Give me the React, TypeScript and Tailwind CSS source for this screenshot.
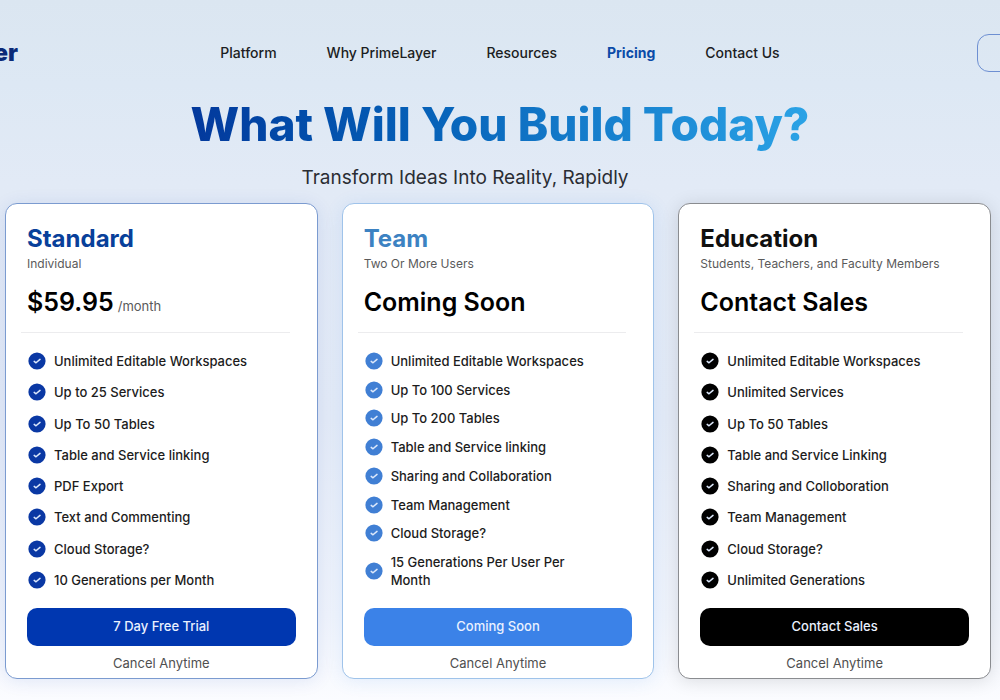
import clsx from 'clsx';

interface Plan {
  name: string;
  audience: string;
  price: string;
  period?: string;
  features: string[];
  action: string;
  cardClass: string;
  nameClass: string;
  iconClass: string;
  buttonClass: string;
}

const navLinks = ['Platform', 'Why PrimeLayer', 'Resources', 'Pricing', 'Contact Us'];

const plans: Plan[] = [
  {
    name: 'Standard',
    audience: 'Individual',
    price: '$59.95',
    period: '/month',
    features: [
      'Unlimited Editable Workspaces',
      'Up to 25 Services',
      'Up To 50 Tables',
      'Table and Service linking',
      'PDF Export',
      'Text and Commenting',
      'Cloud Storage?',
      '10 Generations per Month',
    ],
    action: '7 Day Free Trial',
    cardClass: 'border-[#7b9bd0] shadow-[0_2px_18px_rgba(0,55,178,0.1)]',
    nameClass: 'text-[#08409a]',
    iconClass: 'text-[#0a38a4]',
    buttonClass: 'bg-[#0037b0]',
  },
  {
    name: 'Team',
    audience: 'Two Or More Users',
    price: 'Coming Soon',
    features: [
      'Unlimited Editable Workspaces',
      'Up To 100 Services',
      'Up To 200 Tables',
      'Table and Service linking',
      'Sharing and Collaboration',
      'Team Management',
      'Cloud Storage?',
      '15 Generations Per User Per Month',
    ],
    action: 'Coming Soon',
    cardClass: 'border-[#9fc3ea] shadow-[0_2px_18px_rgba(60,130,232,0.12)]',
    nameClass: 'text-[#3c82c2]',
    iconClass: 'text-[#407fd4]',
    buttonClass: 'bg-[#3b82e8]',
  },
  {
    name: 'Education',
    audience: 'Students, Teachers, and Faculty Members',
    price: 'Contact Sales',
    features: [
      'Unlimited Editable Workspaces',
      'Unlimited Services',
      'Up To 50 Tables',
      'Table and Service Linking',
      'Sharing and Colloboration',
      'Team Management',
      'Cloud Storage?',
      'Unlimited Generations',
    ],
    action: 'Contact Sales',
    cardClass: 'border-[#8a8c90] shadow-[0_2px_18px_rgba(0,0,0,0.12)]',
    nameClass: 'text-[#101010]',
    iconClass: 'text-black',
    buttonClass: 'bg-black',
  },
];

function CheckIcon({ className }: { className: string }) {
  return (
    <svg viewBox="0 0 18 18" className={clsx('size-[18px] shrink-0', className)} aria-hidden="true">
      <circle cx="9" cy="9" r="8.6" fill="currentColor" />
      <path
        d="M6.2 9.4 8 10.8 12 7.4"
        fill="none"
        stroke="#dce8fb"
        strokeWidth="1.5"
        strokeLinecap="round"
        strokeLinejoin="round"
      />
    </svg>
  );
}

function Header() {
  return (
    <header className="-mx-[142px] grid grid-cols-[1fr_auto_1fr] items-center pt-[34px]">
      <a href="#home" className="w-40 text-right text-[23px] leading-7 font-black text-[#0b2a78]">
        PrimeLayer
      </a>
      <nav className="flex gap-[50px] text-sm leading-5 font-medium text-[#1b1d22]">
        {navLinks.map((link) => (
          <a
            key={link}
            href="#"
            className={clsx('whitespace-nowrap', link === 'Pricing' && 'font-bold text-[#0a4ba8]')}
          >
            {link}
          </a>
        ))}
      </nav>
      <button
        type="button"
        aria-label="Account"
        className="h-[38px] w-[165px] justify-self-end rounded-xl border border-[#6d8fd2]"
      />
    </header>
  );
}

function PlanCard({ plan }: { plan: Plan }) {
  return (
    <section className={clsx('rounded-xl border bg-white px-[21px] pt-[21px] pb-1.5', plan.cardClass)}>
      <h2 className={clsx('text-2xl leading-7 font-bold', plan.nameClass)}>{plan.name}</h2>
      <p className="mt-[3px] text-xs leading-4 whitespace-nowrap text-[#5a5a5a]">{plan.audience}</p>
      <p className="mt-3.5 text-[25px] leading-8 font-semibold whitespace-nowrap text-black">
        {plan.price}
        {plan.period && (
          <span className="ml-1 text-[13px] leading-none font-normal text-[#5a5a5a]">
            {plan.period}
          </span>
        )}
      </p>
      <hr className="mt-3.5 mr-1.5 -ml-1.5 border-[#ececee]" />
      <ul className="mt-[19px] flex h-[237px] flex-col justify-between">
        {plan.features.map((feature) => (
          <li
            key={feature}
            className="flex items-center gap-2 pr-10 pl-px text-[13px] leading-[18px] font-medium text-[#1c1c1c]"
          >
            <CheckIcon className={plan.iconClass} />
            <span>{feature}</span>
          </li>
        ))}
      </ul>
      <button
        type="button"
        className={clsx(
          'mt-[19px] h-[38px] w-full rounded-[10px] text-[13px] font-medium text-[#eaf1ff]',
          plan.buttonClass
        )}
      >
        {plan.action}
      </button>
      <p className="mt-2 text-center text-[13px] leading-[18px] text-[#4f4f4f]">Cancel Anytime</p>
    </section>
  );
}

export default function App() {
  return (
    <div className="min-h-screen overflow-hidden bg-[linear-gradient(180deg,#dbe6f1_0%,#dde8f4_12%,#e2eaf6_26%,#e4ebf7_60%,#f0f4fc_88%,#fbfcff_100%)] font-['Inter',sans-serif]">
      <Header />
      <main>
        <h1 className="mx-auto mt-[22px] w-fit bg-linear-to-r from-[#03389c] to-[#2ba3e6] bg-clip-text text-[46px] leading-[60px] font-extrabold whitespace-nowrap text-transparent">
          What Will You Build Today?
        </h1>
        <p className="mt-2.5 pr-[70px] text-center text-[19px] leading-7 text-[#2a2d33]">
          Transform Ideas Into Reality, Rapidly
        </p>
        <div className="mt-[11px] grid grid-cols-3 gap-6 pr-[9px] pl-[5px]">
          {plans.map((plan) => (
            <PlanCard key={plan.name} plan={plan} />
          ))}
        </div>
      </main>
    </div>
  );
}
